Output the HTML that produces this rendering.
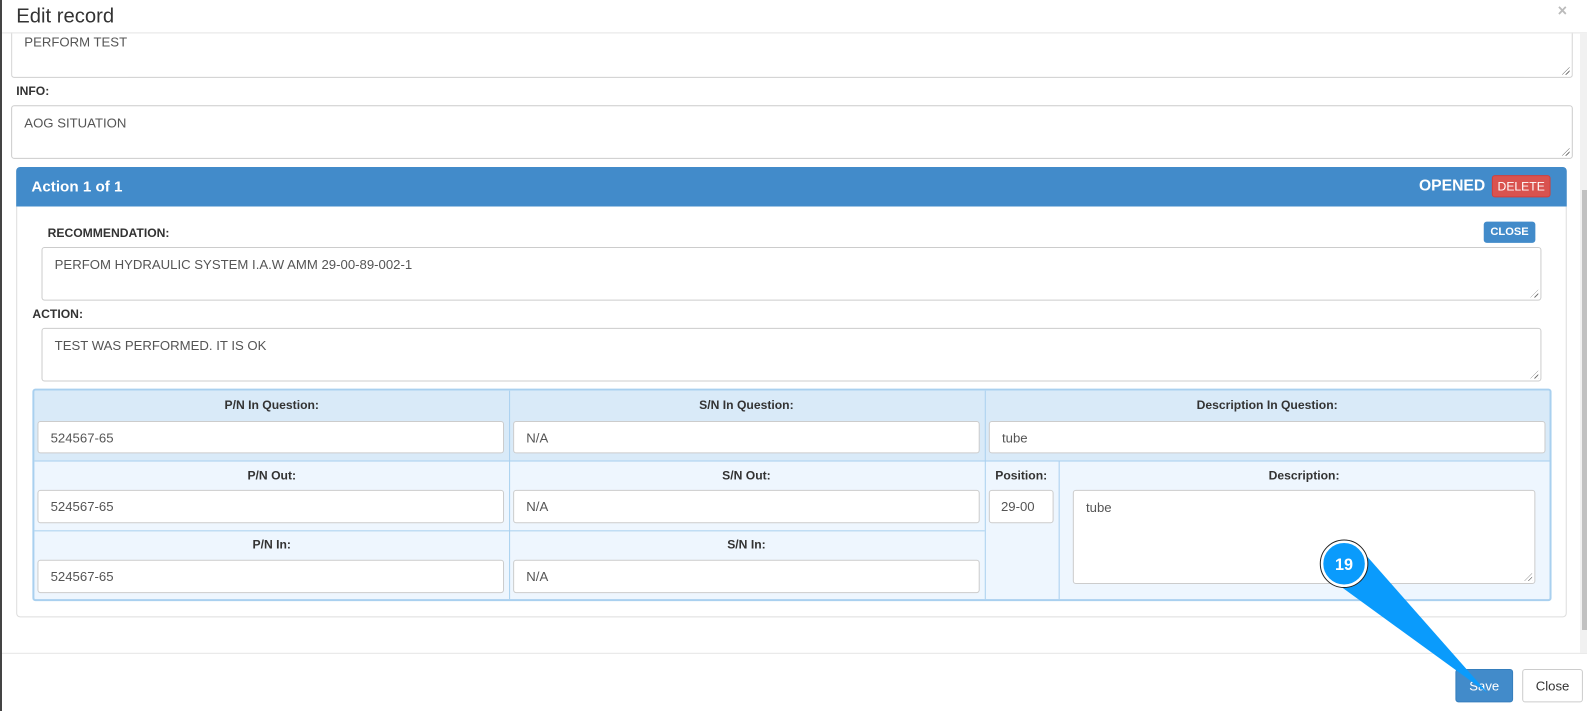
<!DOCTYPE html>
<html><head><style>
*{box-sizing:border-box;margin:0;padding:0}
body{width:1587px;height:711px;background:#fff;font-family:"Liberation Sans",Arial,sans-serif;color:#333;position:relative;overflow:hidden}
.a{position:absolute}
#w{position:absolute;left:0;top:0;width:1568px;height:703px;transform:scale(1.0121);transform-origin:0 0}
.ta{position:absolute;background:#fff;border:1px solid #ccc;border-radius:3px;font-size:13px;color:#555;padding:9px 12px}
.ta.r::after{content:"";position:absolute;right:2px;bottom:2px;width:8px;height:8px;background:repeating-linear-gradient(135deg,transparent 0 2px,#777 2px 3px);clip-path:polygon(100% 0,100% 100%,0 100%)}
.lbl{position:absolute;font-size:12px;font-weight:bold;color:#333}
.inp{position:absolute;background:#fff;border:1px solid #ccc;border-radius:3px;font-size:13px;color:#555;padding:0 12px;display:flex;align-items:center}
.th{position:absolute;font-size:12px;font-weight:bold;color:#333;text-align:center}
</style></head><body>
<div id="w">
<div class="ta r" style="left:11px;top:20px;width:1543px;height:57px;border-top:none;padding-top:14px">PERFORM TEST</div>
<div class="a" style="left:2px;top:0;width:1560px;height:32px;background:#fff"></div>
<div class="a" style="left:16px;top:5px;font-size:20px;color:#333">Edit record</div>
<div class="a" style="left:1539px;top:3px;font-size:16px;color:#bbb;font-weight:bold">×</div>
<div class="a" style="left:2px;top:32px;width:1566px;height:1px;background:#e5e5e5"></div>

<div class="lbl" style="left:16px;top:83px">INFO:</div>
<div class="ta r" style="left:11px;top:104px;width:1543px;height:53px">AOG SITUATION</div>

<div class="a" style="left:16px;top:165px;width:1532px;height:445px;border:1px solid #ddd;border-radius:4px"></div>
<div class="a" style="left:16px;top:165px;width:1532px;height:39px;background:#428bca;border-radius:4px 4px 0 0"></div>
<div class="a" style="left:31px;top:176px;font-size:15px;font-weight:bold;color:#fff">Action 1 of 1</div>
<div class="a" style="left:1402px;top:175px;font-size:15.5px;font-weight:bold;color:#fff">OPENED</div>
<div class="a" style="left:1474px;top:173px;width:58px;height:22px;background:#d9534f;border:1px solid #d43f3a;border-radius:3px;color:#fff;font-size:12px;text-align:center;line-height:20px">DELETE</div>

<div class="lbl" style="left:47px;top:223px">RECOMMENDATION:</div>
<div class="a" style="left:1466px;top:219px;width:51px;height:21px;background:#428bca;border-radius:3px;color:#fff;font-size:11px;font-weight:bold;text-align:center;line-height:21px">CLOSE</div>
<div class="ta r" style="left:41px;top:244px;width:1482px;height:53px">PERFOM HYDRAULIC SYSTEM I.A.W AMM 29-00-89-002-1</div>
<div class="lbl" style="left:32px;top:303px">ACTION:</div>
<div class="ta r" style="left:41px;top:324px;width:1482px;height:53px">TEST WAS PERFORMED. IT IS OK</div>

<div class="a" style="left:32px;top:384px;width:1501px;height:210px;border:2px solid #a9d0ef;border-radius:3px;background:#eef6fe;overflow:hidden">
 <div class="a" style="left:0;top:0;width:1497px;height:70px;background:#d9eaf8;border-bottom:1px solid #a9d0ef"></div>
 <div class="a" style="left:0;top:138px;width:939px;height:1px;background:#a9d0ef"></div>
 <div class="a" style="left:469px;top:0;width:1px;height:210px;background:#a9d0ef"></div>
 <div class="a" style="left:939px;top:0;width:1px;height:210px;background:#a9d0ef"></div>
 <div class="a" style="left:1012px;top:70px;width:1px;height:140px;background:#a9d0ef"></div>
</div>
<div class="th" style="left:34px;top:393px;width:469px">P/N In Question:</div>
<div class="th" style="left:503px;top:393px;width:469px">S/N In Question:</div>
<div class="th" style="left:973px;top:393px;width:558px">Description In Question:</div>
<div class="inp" style="left:37px;top:416px;width:461px;height:32px">524567-65</div>
<div class="inp" style="left:507px;top:416px;width:461px;height:32px">N/A</div>
<div class="inp" style="left:977px;top:416px;width:550px;height:32px">tube</div>

<div class="th" style="left:34px;top:463px;width:469px">P/N Out:</div>
<div class="th" style="left:503px;top:463px;width:469px">S/N Out:</div>
<div class="th" style="left:973px;top:463px;width:72px">Position:</div>
<div class="th" style="left:1046px;top:463px;width:485px">Description:</div>
<div class="inp" style="left:37px;top:484px;width:461px;height:33px">524567-65</div>
<div class="inp" style="left:507px;top:484px;width:461px;height:33px">N/A</div>
<div class="inp" style="left:977px;top:484px;width:64px;height:33px;padding:0 11px">29-00</div>
<div class="ta r" style="left:1060px;top:484px;width:457px;height:93px">tube</div>

<div class="th" style="left:34px;top:531px;width:469px">P/N In:</div>
<div class="th" style="left:503px;top:531px;width:469px">S/N In:</div>
<div class="inp" style="left:37px;top:553px;width:461px;height:33px">524567-65</div>
<div class="inp" style="left:507px;top:553px;width:461px;height:33px">N/A</div>

<div class="a" style="left:2px;top:645px;width:1566px;height:1px;background:#e5e5e5"></div>
<div class="a" style="left:1438px;top:661px;width:57px;height:33px;background:#428bca;border:1px solid #357ebd;border-radius:3px;color:#fff;font-size:13px;text-align:center;line-height:31px">Save</div>
<div class="a" style="left:1504px;top:661px;width:60px;height:33px;background:#fff;border:1px solid #ccc;border-radius:3px;color:#333;font-size:13px;text-align:center;line-height:31px">Close</div>

<svg class="a" style="left:0;top:0" width="1568" height="703">
 <polygon points="1343,541 1313,571 1470,685" fill="#0a9bfc"/>
 <circle cx="1328" cy="557" r="22" fill="#0a9bfc" stroke="#fff" stroke-width="3"/>
 <circle cx="1328" cy="557" r="23.5" fill="none" stroke="#222" stroke-width="1"/>
 <text x="1328" y="563" fill="#fff" font-size="16" font-weight="bold" text-anchor="middle" font-family="Liberation Sans, sans-serif">19</text>
</svg>
</div>
<div class="a" style="left:0;top:0;width:2px;height:711px;background:#444"></div>
<div class="a" style="left:1580px;top:33px;width:7px;height:620px;background:#f1f1f1"></div>
<div class="a" style="left:1582px;top:190px;width:5px;height:440px;background:#c1c1c1"></div>
</body></html>
